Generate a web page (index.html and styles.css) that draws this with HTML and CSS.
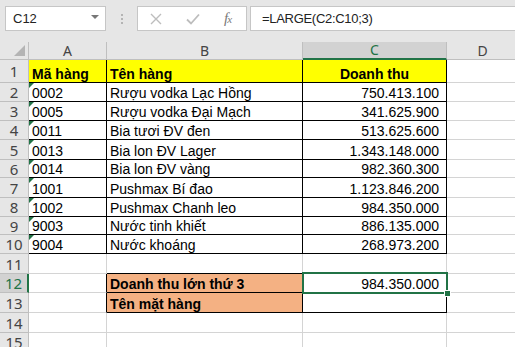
FILE: index.html
```html
<!DOCTYPE html>
<html lang="vi">
<head>
    <meta charset="UTF-8">
    <title>LARGE</title>
    <link rel="stylesheet" href="styles.css">
</head>
<body>
    <div class="toolbar">
        <div class="name-box">
            <span>C12</span>
            <span class="caret"></span>
        </div>
        <div class="grip"><i></i><i></i><i></i></div>
        <div class="fx-buttons">
            <svg class="ico" width="12" height="12" viewBox="0 0 12 12"><path d="M1 1 L11 11 M11 1 L1 11" stroke="#bdbdbd" stroke-width="1.4" fill="none"/></svg>
            <svg class="ico" width="14" height="12" viewBox="0 0 14 12"><path d="M1 6.5 L5 10.5 L13 1.5" stroke="#bdbdbd" stroke-width="1.8" fill="none"/></svg>
            <span class="fx">f<small>x</small></span>
        </div>
        <div class="formula">=LARGE(C2:C10;3)</div>
    </div>

    <div class="sheet">
        <!-- column headers -->
        <div class="corner"></div>
        <div class="col-h">A</div>
        <div class="col-h">B</div>
        <div class="col-h active">C</div>
        <div class="col-h">D</div>

        <div class="row-h">1</div>
        <div class="cell b title">Mã hàng</div>
        <div class="cell b title">Tên hàng</div>
        <div class="cell b title center">Doanh thu</div>
        <div class="cell"></div>

        <div class="row-h">2</div>
        <div class="cell b flag">0002</div>
        <div class="cell b">Rượu vodka Lạc Hồng</div>
        <div class="cell b num">750.413.100</div>
        <div class="cell"></div>

        <div class="row-h">3</div>
        <div class="cell b flag">0005</div>
        <div class="cell b">Rượu vodka Đại Mạch</div>
        <div class="cell b num">341.625.900</div>
        <div class="cell"></div>

        <div class="row-h">4</div>
        <div class="cell b flag">0011</div>
        <div class="cell b">Bia tươi ĐV đen</div>
        <div class="cell b num">513.625.600</div>
        <div class="cell"></div>

        <div class="row-h">5</div>
        <div class="cell b flag">0013</div>
        <div class="cell b">Bia lon ĐV Lager</div>
        <div class="cell b num">1.343.148.000</div>
        <div class="cell"></div>

        <div class="row-h">6</div>
        <div class="cell b flag">0014</div>
        <div class="cell b">Bia lon ĐV vàng</div>
        <div class="cell b num">982.360.300</div>
        <div class="cell"></div>

        <div class="row-h">7</div>
        <div class="cell b flag">1001</div>
        <div class="cell b">Pushmax Bí đao</div>
        <div class="cell b num">1.123.846.200</div>
        <div class="cell"></div>

        <div class="row-h">8</div>
        <div class="cell b flag">1002</div>
        <div class="cell b">Pushmax Chanh leo</div>
        <div class="cell b num">984.350.000</div>
        <div class="cell"></div>

        <div class="row-h">9</div>
        <div class="cell b flag">9003</div>
        <div class="cell b">Nước tinh khiết</div>
        <div class="cell b num">886.135.000</div>
        <div class="cell"></div>

        <div class="row-h">10</div>
        <div class="cell b flag">9004</div>
        <div class="cell b">Nước khoáng</div>
        <div class="cell b num">268.973.200</div>
        <div class="cell"></div>

        <div class="row-h">11</div>
        <div class="cell"></div>
        <div class="cell bb"></div>
        <div class="cell bb"></div>
        <div class="cell"></div>

        <div class="row-h active">12</div>
        <div class="cell br"></div>
        <div class="cell b label">Doanh thu lớn thứ 3</div>
        <div class="cell b num selected">984.350.000<span class="handle"></span></div>
        <div class="cell"></div>

        <div class="row-h">13</div>
        <div class="cell br"></div>
        <div class="cell b label">Tên mặt hàng</div>
        <div class="cell b"></div>
        <div class="cell"></div>

        <div class="row-h">14</div>
        <div class="cell"></div>
        <div class="cell"></div>
        <div class="cell"></div>
        <div class="cell"></div>

        <div class="row-h">15</div>
        <div class="cell"></div>
        <div class="cell"></div>
        <div class="cell"></div>
        <div class="cell"></div>
    </div>
</body>
</html>
```

FILE: styles.css
```css
:root {
    --chrome: #e6e6e6;
    --grid: #d4d4d4;
    --head-line: #bfbfbf;
    --green: #217346;
    --yellow: #ffff00;
    --orange: #f4b183;
}

* {
    margin: 0;
    padding: 0;
    box-sizing: border-box;
}

body {
    width: 515px;
    height: 347px;
    overflow: hidden;
    background: #ffffff;
    font-family: 'Liberation Sans', Arial, sans-serif;
    color: #000;
}

/* formula bar */
.toolbar {
    height: 42px;
    background: var(--chrome);
    display: flex;
    align-items: flex-start;
    padding: 6px 0 0 5px;
    white-space: nowrap;
}

.name-box {
    width: 101px;
    height: 25px;
    background: #fff;
    border: 1px solid #c6c6c6;
    display: flex;
    align-items: center;
    justify-content: space-between;
    padding: 0 6px 0 7px;
    font-size: 13px;
    color: #222;
}

.caret {
    width: 0;
    height: 0;
    border-left: 4px solid transparent;
    border-right: 4px solid transparent;
    border-top: 4px solid #777;
    margin-top: -4px;
}

.grip {
    width: 31px;
    height: 25px;
    display: flex;
    flex-direction: column;
    align-items: center;
    justify-content: center;
    gap: 2px;
}

.grip i {
    width: 2px;
    height: 2px;
    background: #b4b4b4;
}

.fx-buttons {
    width: 110px;
    height: 25px;
    background: #fff;
    border: 1px solid #c6c6c6;
    display: flex;
    align-items: center;
    padding-left: 12px;
}

.fx-buttons .ico:first-child {
    margin-right: 24px;
}

.fx-buttons .ico:nth-child(2) {
    margin-right: 24px;
}

.fx {
    font-family: 'Liberation Serif', 'Times New Roman', serif;
    font-style: italic;
    font-size: 15px;
    color: #7a7a7a;
    letter-spacing: -1px;
}

.fx small {
    font-size: 11px;
}

.formula {
    flex: 1;
    height: 25px;
    margin-left: 3px;
    background: #fff;
    border: 1px solid #c6c6c6;
    border-right: none;
    padding-left: 11px;
    font-size: 13px;
    line-height: 23px;
    letter-spacing: -0.3px;
    color: #222;
}

/* grid */
.sheet {
    display: grid;
    grid-template-columns: 29px 78px 196px 144px 72px;
    grid-template-rows: 18px 23px 19px 19px 19px 20px 18px 20px 19px 18px 19px 20px 19px 20px 20px 19px;
}

.corner,
.col-h,
.row-h {
    background: var(--chrome);
    border-right: 1px solid var(--head-line);
    border-bottom: 1px solid var(--head-line);
    font-family: 'Noto Sans', 'Open Sans', sans-serif;
    font-size: 14px;
    color: #444;
    display: flex;
    align-items: center;
    justify-content: center;
}

.corner {
    position: relative;
}

.corner::after {
    content: '';
    position: absolute;
    right: 3px;
    bottom: 3px;
    border-left: 11px solid transparent;
    border-bottom: 11px solid #b4b4b4;
}

.col-h {
    line-height: 16px;
}

.col-h.active {
    background: #d2d2d2;
    color: var(--green);
    border-bottom: 2px solid var(--green);
}

.row-h {
    font-size: 15px;
    line-height: 16px;
}

.row-h.active {
    background: #d2d2d2;
    color: var(--green);
    border-right: 2px solid var(--green);
}

.cell {
    border-right: 1px solid var(--grid);
    border-bottom: 1px solid var(--grid);
    font-size: 14px;
    line-height: 16px;
    padding-left: 3px;
    display: flex;
    align-items: flex-end;
    white-space: nowrap;
    position: relative;
}

.cell.b {
    border-right-color: #000;
    border-bottom-color: #000;
}

.cell.bb {
    border-bottom-color: #000;
}

.cell.br {
    border-right-color: #000;
}

.title {
    background: var(--yellow);
    font-weight: bold;
}

.label {
    background: var(--orange);
    font-weight: bold;
}

.center {
    justify-content: center;
    padding-left: 0;
}

.num {
    justify-content: flex-end;
    padding-right: 7px;
}

.flag::before {
    content: '';
    position: absolute;
    left: 0;
    top: 0;
    border-top: 5px solid var(--green);
    border-right: 5px solid transparent;
}

.selected::after {
    content: '';
    position: absolute;
    left: -1px;
    top: -2px;
    right: -2px;
    bottom: -2px;
    border: 2px solid var(--green);
    z-index: 2;
}

.handle {
    position: absolute;
    right: -5px;
    bottom: -5px;
    width: 7px;
    height: 7px;
    background: var(--green);
    border: 1px solid #fff;
    z-index: 3;
}
```
